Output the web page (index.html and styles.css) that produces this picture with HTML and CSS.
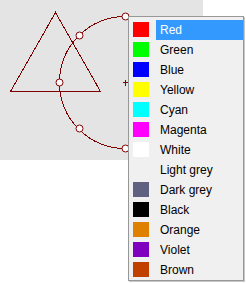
FILE: index.html
```html
<!DOCTYPE html>
<html lang="en">
  <head>
    <meta charset="UTF-8" />
    <title>Colour menu</title>
    <link rel="stylesheet" href="styles.css">
  </head>
  <body>
    <div class="canvas">
      <svg width="203" height="160" viewBox="0 0 203 160">
        <g class="shapes" fill="none" stroke="#800000" stroke-width="1">
          <polygon points="55.5,12.5 10.5,91.5 100.5,91.5" />
          <path d="M125.5,16.5 A66,66 0 0 0 125.5,148.5" />
          <path d="M122.5,82.5 H128.5 M125.5,79.5 V85.5" />
        </g>
        <g class="handles" fill="#fff" stroke="#800000" stroke-width="1">
          <circle cx="125.5" cy="16.5" r="3.5" />
          <circle cx="79.5" cy="35.5" r="3.5" />
          <circle cx="59.5" cy="82.5" r="3.5" />
          <circle cx="79.5" cy="128.5" r="3.5" />
          <circle cx="125.5" cy="148.5" r="3.5" />
        </g>
      </svg>
    </div>

    <!-- Popup menu -->
    <ul class="menu">
      <li class="item active"><span class="swatch" style="background:#ff0000"></span><span class="label">Red</span></li>
      <li class="item"><span class="swatch" style="background:#00ff00"></span><span class="label">Green</span></li>
      <li class="item"><span class="swatch" style="background:#0000ff"></span><span class="label">Blue</span></li>
      <li class="item"><span class="swatch" style="background:#ffff00"></span><span class="label">Yellow</span></li>
      <li class="item"><span class="swatch" style="background:#00ffff"></span><span class="label">Cyan</span></li>
      <li class="item"><span class="swatch" style="background:#ff00ff"></span><span class="label">Magenta</span></li>
      <li class="item"><span class="swatch" style="background:#ffffff"></span><span class="label">White</span></li>
      <li class="item"><span class="swatch" style="background:#f0f0f0"></span><span class="label">Light grey</span></li>
      <li class="item"><span class="swatch" style="background:#606080"></span><span class="label">Dark grey</span></li>
      <li class="item"><span class="swatch" style="background:#000000"></span><span class="label">Black</span></li>
      <li class="item"><span class="swatch" style="background:#e08000"></span><span class="label">Orange</span></li>
      <li class="item"><span class="swatch" style="background:#8000c0"></span><span class="label">Violet</span></li>
      <li class="item"><span class="swatch" style="background:#c04000"></span><span class="label">Brown</span></li>
    </ul>
  </body>
</html>
```

FILE: styles.css
```css
body {
  margin: 0;
  background-color: #fff;
  font-family: "Liberation Sans", Arial, sans-serif;
  font-size: 12px;
  position: relative;
  width: 246px;
  height: 283px;
  overflow: hidden;
}

.canvas {
  width: 203px;
  height: 160px;
  background-color: #e4e4e4;
}

.canvas svg {
  display: block;
}

.shapes {
  shape-rendering: crispEdges;
}

/* Popup menu */
.menu {
  position: absolute;
  top: 16px;
  left: 128px;
  width: 114px;
  margin: 0;
  padding: 3px 0 0;
  list-style: none;
  background-color: #f0f0f0;
  border: 1px solid #979797;
  box-shadow: 1px 1px 0 #c8c8c8;
}

.item {
  display: flex;
  height: 20px;
}

.swatch {
  width: 16px;
  height: 15px;
  margin: 2px 7px 0 4px;
}

.label {
  flex: 1;
  padding-left: 4px;
  line-height: 20px;
  color: #000;
}

.item.active .label {
  background-color: #3399ff;
  color: #fff;
}
```
